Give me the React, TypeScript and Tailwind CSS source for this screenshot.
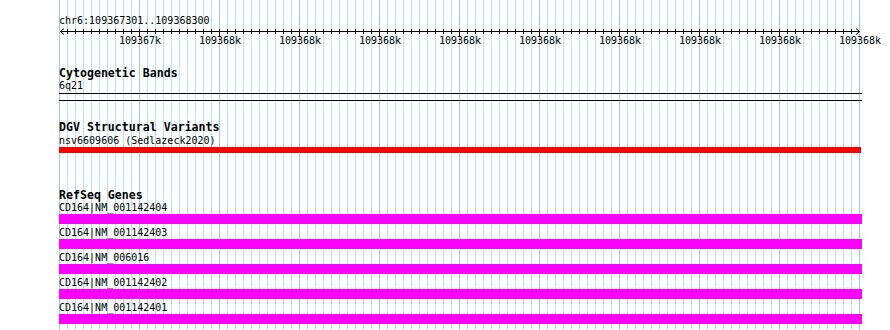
const GRID = Array.from({ length: 101 }, (_, i) => i);
const TICK_LABELS = [
  "109367k",
  "109368k",
  "109368k",
  "109368k",
  "109368k",
  "109368k",
  "109368k",
  "109368k",
  "109368k",
  "109368k",
];

const TRANSCRIPTS = [
  "CD164|NM_001142404",
  "CD164|NM_001142403",
  "CD164|NM_006016",
  "CD164|NM_001142402",
  "CD164|NM_001142401",
];

const Title = ({ children, className = "" }: { children: string; className?: string }) => (
  <div className={`ml-[59px] text-[11.6px] leading-[13px] font-bold ${className}`}>{children}</div>
);

const Label = ({ children, className = "" }: { children: string; className?: string }) => (
  <div className={`ml-[59px] text-[10px] leading-[12px] ${className}`}>{children}</div>
);

export default function App() {
  return (
    <div className="relative w-[890px] h-[330px] overflow-hidden bg-white text-black font-['DejaVu_Sans_Mono',monospace]">
      {/* background grid */}
      <svg className="absolute inset-0" width={890} height={330}>
        {GRID.map((i) => (
          <line
            key={i}
            x1={59.5 + i * 8}
            x2={59.5 + i * 8}
            y1={0}
            y2={330}
            stroke={i % 10 === 0 ? "#9ccbe6" : "#b4e3e8"}
            strokeWidth={1}
          />
        ))}
      </svg>

      <div className="relative flex flex-col">
        {/* ruler */}
        <Label className="mt-[15px]">chr6:109367301..109368300</Label>
        <svg width={890} height={22} className="block">
          <line x1={60} x2={860} y1={4.5} y2={4.5} stroke="#000" />
          <polyline points="64,1.5 60.5,4.5 64,7.5" fill="none" stroke="#000" />
          <polyline points="856,1.5 859.5,4.5 856,7.5" fill="none" stroke="#000" />
          {GRID.slice(1, 100).map((i) => (
            <line
              key={i}
              x1={59.5 + i * 8}
              x2={59.5 + i * 8}
              y1={2}
              y2={i % 10 === 0 ? 9 : 7}
              stroke="#000"
            />
          ))}
          {TICK_LABELS.map((t, i) => (
            <text
              key={i}
              x={140 + i * 80}
              y={17}
              textAnchor="middle"
              fontSize={10}
              fontFamily="DejaVu Sans Mono, monospace"
              fill="#000"
            >
              {t}
            </text>
          ))}
        </svg>

        {/* cytogenetic bands */}
        <Title className="mt-[18px]">Cytogenetic Bands</Title>
        <Label>6q21</Label>
        <div className="ml-[59px] mt-px w-[803px] h-[8px] border-y border-black" />

        {/* DGV */}
        <Title className="mt-[20px]">DGV Structural Variants</Title>
        <Label className="mt-px">nsv6609606 (Sedlazeck2020)</Label>
        <div className="ml-[59px] w-[802px] h-[6px] bg-[#ff0000]" />

        {/* RefSeq */}
        <Title className="mt-[36px]">RefSeq Genes</Title>
        {TRANSCRIPTS.map((t, i) => (
          <div key={i} className={i > 0 ? "mt-[3px]" : ""}>
            <Label>{t}</Label>
            <div className="ml-[59px] w-[803px] h-[10px] bg-[#ff00ff]" />
          </div>
        ))}
      </div>
    </div>
  );
}
